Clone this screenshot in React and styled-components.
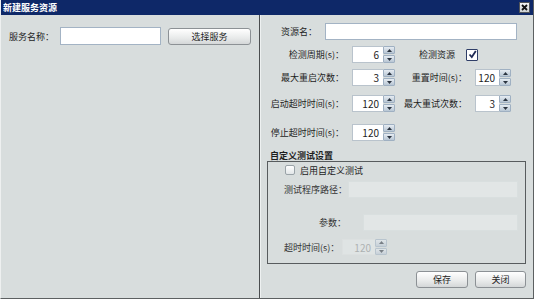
import React, { useState } from 'react';
import styled, { createGlobalStyle } from 'styled-components';

const GlobalStyle = createGlobalStyle`
  html, body {
    margin: 0;
    padding: 0;
    background: #d8dddd;
  }
  * {
    box-sizing: border-box;
  }
`;

const Window = styled.div`
  width: 534px;
  height: 299px;
  display: flex;
  flex-direction: column;
  background: #d8dddd;
  font-family: 'Noto Sans CJK SC', 'DejaVu Sans', sans-serif;
  font-size: 9px;
  color: #1e1e1e;
  border-right: 1px solid #5c6061;
  border-bottom: 1px solid #5c6061;
  border-left: 1px solid #eef0f0;
  overflow: hidden;
`;

const TitleBar = styled.div`
  height: 15px;
  flex-shrink: 0;
  display: flex;
  align-items: center;
  justify-content: space-between;
  padding: 0 3px 0 2px;
  background: #0e2868;
  color: #fff;
  font-weight: 700;
  font-size: 9px;
  line-height: 15px;
`;

const CloseButton = styled.div`
  width: 11px;
  height: 11px;
  display: flex;
  align-items: center;
  justify-content: center;
  background: linear-gradient(#f4f4f4, #cfd3d4);
  border: 1px solid #50545a;
`;

const Body = styled.div`
  flex: 1;
  display: flex;
  min-height: 0;
`;

const LeftPanel = styled.div`
  width: 259px;
  flex-shrink: 0;
  border-right: 1px solid #4a4d4f;
  padding: 12px 0 0 8px;
`;

const RightPanel = styled.div`
  flex: 1;
  display: flex;
  flex-direction: column;
  padding: 8px 7px 0 0;
  border-left: 1px solid #eef1f1;
`;

const Row = styled.div`
  display: flex;
  align-items: center;
  height: ${(p) => p.$h || 17}px;
  margin-top: ${(p) => p.$mt || 0}px;
  padding-left: ${(p) => p.$pl || 0}px;
`;

const Label = styled.span`
  display: inline-block;
  width: ${(p) => (p.$w ? `${p.$w}px` : 'auto')};
  text-align: ${(p) => p.$align || 'left'};
  margin-right: ${(p) => p.$mr ?? 8}px;
  white-space: nowrap;
  flex-shrink: 0;
  color: ${(p) => (p.$muted ? '#333' : '#1e1e1e')};
`;

const TextInput = styled.input`
  width: ${(p) => p.$w}px;
  height: ${(p) => p.$h || 17}px;
  border: 1px solid ${(p) => (p.disabled ? '#d9dfdf' : '#a3b3c4')};
  background: ${(p) => (p.disabled ? '#e2e6e6' : '#fff')};
  padding: 0 3px;
  font: inherit;
  outline: none;
  flex-shrink: 0;
`;

const Button = styled.button`
  width: ${(p) => p.$w}px;
  height: 17px;
  margin-left: ${(p) => p.$ml || 0}px;
  padding: 0;
  border: 1px solid #8c9195;
  border-radius: 3px;
  background: linear-gradient(#ffffff, #e8eaea 60%, #d4d7d8);
  font: inherit;
  color: #1e1e1e;
  flex-shrink: 0;
`;

const SpinBox = styled.div`
  display: flex;
  width: ${(p) => p.$w}px;
  height: ${(p) => p.$h || 17}px;
  flex-shrink: 0;
  opacity: ${(p) => (p.$disabled ? 0.55 : 1)};
`;

const SpinValue = styled.div`
  flex: 1;
  border: 1px solid ${(p) => (p.$disabled ? '#e0e4e4' : '#b9c3cc')};
  border-right: none;
  background: ${(p) => (p.$disabled ? '#e6eaea' : '#fff')};
  text-align: right;
  padding-right: 4px;
  font-size: 10px;
  line-height: 15px;
  color: ${(p) => (p.$disabled ? '#8a8f90' : '#1e1e1e')};
`;

const SpinButtons = styled.div`
  width: 12px;
  display: flex;
  flex-direction: column;
  gap: 1px;
`;

const SpinArrow = styled.div`
  flex: 1;
  display: flex;
  align-items: center;
  justify-content: center;
  background: linear-gradient(#e6ecf2, #b8c6d4);
  border: 1px solid #9fb0c2;
  border-radius: 1px;
`;

const CheckBox = styled.div`
  width: ${(p) => p.$size || 11}px;
  height: ${(p) => p.$size || 11}px;
  flex-shrink: 0;
  border: 1px solid ${(p) => (p.$checked ? '#2f3e68' : '#9aa3a8')};
  border-radius: ${(p) => (p.$checked ? 1 : 2)}px;
  background: ${(p) => (p.$checked ? '#fff' : 'linear-gradient(#ffffff, #e2e6e8)')};
  display: flex;
  align-items: center;
  justify-content: center;
  margin-right: ${(p) => p.$mr || 0}px;
`;

const SectionTitle = styled.div`
  margin: 9px 0 0 9px;
  height: 11px;
  line-height: 11px;
  font-weight: 700;
`;

const GroupBox = styled.div`
  margin-left: 6px;
  height: 103px;
  border: 1px solid #585c5e;
  padding: 2px 3px 0 0;
  display: flex;
  flex-direction: column;
`;

const ButtonBar = styled.div`
  display: flex;
  justify-content: flex-end;
  margin-top: 7px;
`;

const Arrow = ({ up }) => (
  <svg width="5" height="3" viewBox="0 0 5 3">
    <path d={up ? 'M2.5 0L5 3H0z' : 'M0 0h5L2.5 3z'} fill="#2b3440" />
  </svg>
);

const Spinner = ({ value, w, h, disabled }) => (
  <SpinBox $w={w} $h={h} $disabled={disabled}>
    <SpinValue $disabled={disabled}>{value}</SpinValue>
    <SpinButtons>
      <SpinArrow>
        <Arrow up />
      </SpinArrow>
      <SpinArrow>
        <Arrow />
      </SpinArrow>
    </SpinButtons>
  </SpinBox>
);

const App = () => {
  const [checkRes, setCheckRes] = useState(true);
  const [custom, setCustom] = useState(false);

  return (
    <>
      <GlobalStyle />
      <Window>
        <TitleBar>
          <span>新建服务资源</span>
          <CloseButton>
            <svg width="7" height="7" viewBox="0 0 7 7">
              <path d="M1 1L6 6M6 1L1 6" stroke="#111" strokeWidth="1.8" />
            </svg>
          </CloseButton>
        </TitleBar>
        <Body>
          <LeftPanel>
            <Row $h={18}>
              <Label $mr={6}>服务名称：</Label>
              <TextInput $w={101} $h={18} />
              <Button $w={83} $ml={7}>
                选择服务
              </Button>
            </Row>
          </LeftPanel>
          <RightPanel>
            <Row>
              <Label $w={56} $align="right">
                资源名：
              </Label>
              <TextInput $w={192} />
            </Row>
            <Row $mt={6}>
              <Label $w={83} $align="right">
                检测周期(s)：
              </Label>
              <Spinner value="6" w={43} />
              <Label $w={60} $align="right" $mr={11}>
                检测资源
              </Label>
              <CheckBox $checked={checkRes} $size={12} onClick={() => setCheckRes(!checkRes)}>
                {checkRes && (
                  <svg width="9" height="9" viewBox="0 0 9 9">
                    <path d="M1.5 4.5L3.8 7L7.8 1" stroke="#1f2a55" strokeWidth="1.8" fill="none" />
                  </svg>
                )}
              </CheckBox>
            </Row>
            <Row $mt={6}>
              <Label $w={83} $align="right">
                最大重启次数：
              </Label>
              <Spinner value="3" w={43} />
              <Label $w={72} $align="right">
                重置时间(s)：
              </Label>
              <Spinner value="120" w={36} />
            </Row>
            <Row $mt={9}>
              <Label $w={83} $align="right">
                启动超时时间(s)：
              </Label>
              <Spinner value="120" w={43} />
              <Label $w={72} $align="right">
                最大重试次数：
              </Label>
              <Spinner value="3" w={36} />
            </Row>
            <Row $mt={12}>
              <Label $w={83} $align="right">
                停止超时时间(s)：
              </Label>
              <Spinner value="120" w={43} />
            </Row>
            <SectionTitle>自定义测试设置</SectionTitle>
            <GroupBox>
              <Row $h={12} $pl={17}>
                <CheckBox $checked={custom} $size={10} $mr={5} onClick={() => setCustom(!custom)} />
                <Label>启用自定义测试</Label>
              </Row>
              <Row $mt={5} $pl={16}>
                <Label $w={58} $mr={6} $muted>
                  测试程序路径：
                </Label>
                <TextInput disabled $w={170} />
              </Row>
              <Row $mt={16} $pl={16}>
                <Label $w={62} $align="right" $mr={17} $muted>
                  参数：
                </Label>
                <TextInput disabled $w={155} />
              </Row>
              <Row $mt={8} $pl={16} $h={16}>
                <Label $w={51} $mr={7} $muted>
                  超时时间(s)：
                </Label>
                <Spinner value="120" w={45} h={16} disabled />
              </Row>
            </GroupBox>
            <ButtonBar>
              <Button $w={52}>保存</Button>
              <Button $w={51} $ml={7}>
                关闭
              </Button>
            </ButtonBar>
          </RightPanel>
        </Body>
      </Window>
    </>
  );
};

export default App;
